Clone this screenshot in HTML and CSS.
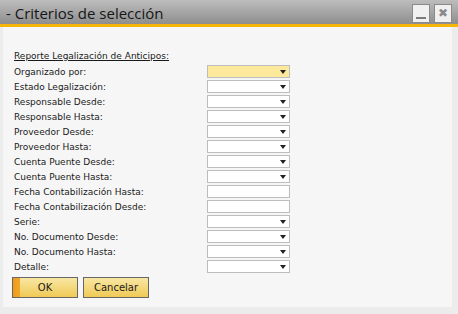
FILE: index.html
```html
<!DOCTYPE html>
<html lang="es">
<head>
    <meta charset="UTF-8">
    <title>Criterios de selección</title>
    <link rel="stylesheet" href="styles.css">
</head>
<body>
    <div class="title-bar">
        <span class="title">- Criterios de selección</span>
        <div class="title-buttons">
            <div class="win-btn"><span class="min-bar"></span></div>
            <div class="win-btn close">&#10006;</div>
        </div>
    </div>

    <div class="panel">
        <div class="section-title">Reporte Legalización de Anticipos:</div>

        <div class="row"><label>Organizado por:</label><div class="field combo active"></div></div>
        <div class="row"><label>Estado Legalización:</label><div class="field combo"></div></div>
        <div class="row"><label>Responsable Desde:</label><div class="field combo"></div></div>
        <div class="row"><label>Responsable Hasta:</label><div class="field combo"></div></div>
        <div class="row"><label>Proveedor Desde:</label><div class="field combo"></div></div>
        <div class="row"><label>Proveedor Hasta:</label><div class="field combo"></div></div>
        <div class="row"><label>Cuenta Puente Desde:</label><div class="field combo"></div></div>
        <div class="row"><label>Cuenta Puente Hasta:</label><div class="field combo"></div></div>
        <div class="row"><label>Fecha Contabilización Hasta:</label><div class="field"></div></div>
        <div class="row"><label>Fecha Contabilización Desde:</label><div class="field"></div></div>
        <div class="row"><label>Serie:</label><div class="field combo"></div></div>
        <div class="row"><label>No. Documento Desde:</label><div class="field combo"></div></div>
        <div class="row"><label>No. Documento Hasta:</label><div class="field combo"></div></div>
        <div class="row"><label>Detalle:</label><div class="field combo"></div></div>

        <div class="actions">
            <button class="btn primary">OK</button>
            <button class="btn">Cancelar</button>
        </div>
    </div>
</body>
</html>
```

FILE: styles.css
```css
body {
    margin: 0;
    width: 458px;
    height: 314px;
    background-color: #ececec;
    font-family: "DejaVu Sans", sans-serif;
    color: #1a1a1a;
    overflow: hidden;
}

.title-bar {
    height: 24px;
    display: flex;
    align-items: center;
    justify-content: space-between;
    background: linear-gradient(to bottom, #bdbdbd, #8e8e8e);
    border-bottom: 3px solid #f5b50a;
    padding: 0 6px 0 6px;
}

.title {
    font-family: "Open Sans", sans-serif;
    font-size: 15px;
    color: #161616;
    margin-top: 1px;
}

.title-buttons {
    display: flex;
    gap: 4px;
    margin-top: 2px;
}

.win-btn {
    width: 16px;
    height: 17px;
    border: 1px solid #8a8a8a;
    background-color: #f0f0f0;
    display: flex;
    align-items: center;
    justify-content: center;
    color: #8a8a8a;
    font-size: 12px;
    line-height: 1;
}

.min-bar {
    width: 10px;
    height: 2px;
    background-color: #7a7a7a;
    margin-top: 9px;
}

.panel {
    margin-left: 3px;
    width: 449px;
    height: 280px;
    background-color: #f6f6f6;
    padding: 22px 0 0 11px;
    box-sizing: border-box;
}

.section-title {
    font-size: 9px;
    text-decoration: underline;
    height: 15px;
    line-height: 15px;
}

.row {
    display: flex;
    align-items: center;
    height: 15px;
}

.row label {
    width: 193px;
    font-size: 9px;
}

.field {
    position: relative;
    width: 81px;
    height: 11px;
    border: 1px solid #bdbdbd;
    background-color: #ffffff;
}

.field.active {
    background-color: #fde99b;
}

.combo::after {
    content: "";
    position: absolute;
    right: 3px;
    top: 4px;
    border-left: 3px solid transparent;
    border-right: 3px solid transparent;
    border-top: 4px solid #222;
}

.actions {
    display: flex;
    gap: 5px;
    margin-top: 3px;
    margin-left: -2px;
}

.btn {
    width: 66px;
    height: 21px;
    border: 1px solid #666666;
    background: linear-gradient(to bottom, #f8e6a4, #f0ca55);
    font-family: "DejaVu Sans", sans-serif;
    font-size: 10px;
    color: #1a1a1a;
    padding: 0;
}

.btn.primary {
    background: linear-gradient(to right, #f09a1c 0, #f0a828 7px, transparent 7px),
                linear-gradient(to bottom, #f8e6a4, #f0ca55);
}
```
